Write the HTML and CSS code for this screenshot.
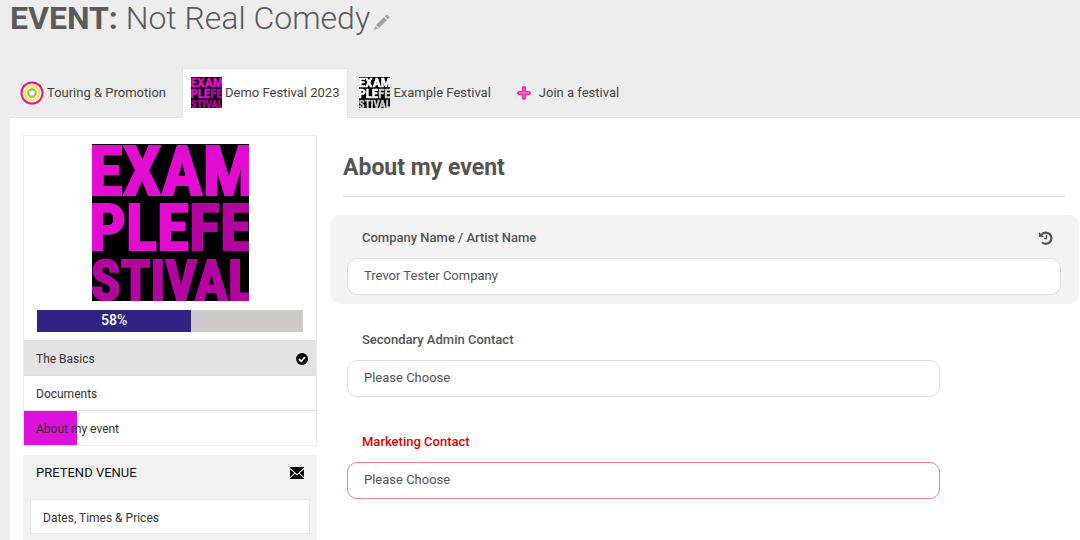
FILE: index.html
```
<!DOCTYPE html>
<html lang="en">
  <head>
    <meta charset="UTF-8" />
    <title>Not Real Comedy - About my event</title>
    <meta name="viewport" content="width=device-width, initial-scale=1.0" />
    <link rel="stylesheet" href="styles.css">
  </head>
  <body>
    <!-- Festival poster, shared by the tabs and the sidebar -->
    <svg class="sprite" aria-hidden="true">
      <symbol id="poster" viewBox="0 0 157 157">
        <rect class="poster-bg" width="157" height="157" />
        <g class="poster-text">
          <text class="row-1" x="-3" y="51">EXAM</text>
          <text class="row-2" x="-3" y="106">PLE<tspan class="dim">FE</tspan></text>
          <text class="row-3 dim" x="-1" y="156">STIVAL</text>
        </g>
      </symbol>
    </svg>

    <header class="page-header">
      <h1><strong>EVENT:</strong> Not Real Comedy</h1>
      <button class="icon-btn" type="button" aria-label="Edit event name">
        <svg width="16" height="16" viewBox="0 0 16 16" fill="#a3a3a3">
          <path d="M0 16l1.200-4.200 3 3zM2 11l7.800-7.800 3 3L5 14zM10.800 2.200l1.300-1.300q.8-.8 1.600 0l1.400 1.400q.8.800 0 1.600l-1.300 1.300z" />
        </svg>
      </button>
    </header>

    <nav class="tabs">
      <a class="tab" href="#">
        <svg class="rings" width="24" height="24" viewBox="0 0 24 24" fill="none" stroke-width="2">
          <circle cx="12" cy="12" r="10.500" fill="#fff" stroke="#ec1283" />
          <circle cx="12" cy="12" r="7.300" stroke="#ffee1c" />
          <circle cx="12" cy="12" r="3.800" stroke="#8cc63f" />
        </svg>
        Touring &amp; Promotion
      </a>
      <a class="tab active" href="#">
        <svg class="thumb" viewBox="0 0 157 157"><use href="#poster" /></svg>
        Demo Festival 2023
      </a>
      <a class="tab" href="#">
        <svg class="thumb mono" viewBox="0 0 157 157"><use href="#poster" /></svg>
        Example Festival
      </a>
      <a class="tab join" href="#">
        <svg width="14" height="14" viewBox="0 0 14 14">
          <path d="M7 2v10M2 7h10" stroke="#ff1aa6" stroke-width="4" stroke-linecap="round" />
          <path d="M7 2v10M2 7h10" stroke="#fba6d8" stroke-width="1" />
        </svg>
        Join a festival
      </a>
    </nav>

    <div class="panel">
      <aside class="sidebar">
        <div class="progress-card">
          <svg class="poster" viewBox="0 0 157 157" role="img" aria-label="Example Festival"><use href="#poster" /></svg>
          <div class="progress">
            <div class="progress-bar" style="width: 58%">58%</div>
          </div>
          <a class="step done" href="#">
            The Basics
            <svg width="12" height="12" viewBox="0 0 12 12">
              <circle cx="6" cy="6" r="6" />
              <path d="M3 6l2.300 2.300L9 4.200" fill="none" stroke="#fff" stroke-width="1.800" />
            </svg>
          </a>
          <a class="step" href="#">Documents</a>
          <a class="step current" href="#">About my event</a>
        </div>

        <div class="venue">
          <div class="venue-head">
            <h3>PRETEND VENUE</h3>
            <svg width="14" height="12" viewBox="0 0 14 12">
              <path d="M0 0h14v.8L7 7 0 .8zM0 2.200L4.200 6 0 10.200zM14 2.200L9.800 6l4.200 4.200zM0 12v-.6L5 6.800l2 1.700 2-1.700 5 4.600v.6z" />
            </svg>
          </div>
          <a class="step" href="#">Dates, Times &amp; Prices</a>
        </div>
      </aside>

      <main class="content">
        <h2>About my event</h2>
        <form>
          <div class="field highlighted">
            <div class="field-head">
              <label for="company">Company Name / Artist Name</label>
              <button class="icon-btn" type="button" aria-label="History">
                <svg width="14" height="14" viewBox="0 0 14 14" fill="none" stroke="#555">
                  <path d="M2.500 3.600A5.600 5.600 0 1 1 3 11.300" stroke-width="2.200" />
                  <path d="M0 1v5h5z" fill="#555" stroke="none" />
                  <path d="M7.500 4v3.500H5" stroke-width="1.300" />
                </svg>
              </button>
            </div>
            <input id="company" type="text" value="Trevor Tester Company" />
          </div>
          <div class="field">
            <div class="field-head">
              <label for="admin-contact">Secondary Admin Contact</label>
            </div>
            <select id="admin-contact">
              <option>Please Choose</option>
            </select>
          </div>
          <div class="field error">
            <div class="field-head">
              <label for="marketing-contact">Marketing Contact</label>
            </div>
            <select id="marketing-contact">
              <option>Please Choose</option>
            </select>
          </div>
        </form>
      </main>
    </div>
  </body>
</html>
```
FILE: styles.css
```
* {
  box-sizing: border-box;
}

body {
  margin: 0;
  padding-left: 10px;
  background: #ededed;
  color: #444;
  font-family: Roboto, "Liberation Sans", sans-serif;
  font-size: 13px;
  line-height: 20px;
}

a {
  color: inherit;
  text-decoration: none;
}

.sprite {
  display: none;
}

.page-header {
  display: flex;
  align-items: center;
  gap: 4px;
  height: 36px;
  margin-bottom: 32px;
}

h1 {
  margin: 0;
  color: #5a5a5a;
  font-size: 32px;
  font-weight: 300;
  line-height: 36px;
}

h1 strong {
  font-weight: 700;
}

.icon-btn {
  display: flex;
  padding: 0;
  border: 0;
  background: none;
  cursor: pointer;
}

.page-header .icon-btn {
  padding-top: 8px;
}

/* Tabs */
.tabs {
  display: flex;
  height: 50px;
  border-bottom: 1px solid #e4e4e4;
}

.tab {
  display: flex;
  align-items: center;
  gap: 3px;
  height: 50px;
  padding: 0 8px 2px;
  border: 1px solid transparent;
  border-bottom: 0;
}

.tab.active {
  border-color: #e4e4e4;
  background: #fff;
}

.tab:first-child {
  padding-right: 15px;
  padding-left: 9px;
}

.tab:nth-child(3) {
  padding-left: 10px;
}

.tab.join {
  gap: 8px;
  margin-left: 8px;
}

.thumb {
  width: 31px;
  height: 31px;
}

/* Poster */
.poster-bg {
  fill: #000;
}

.poster-text {
  fill: #e20dd0;
  stroke: #e20dd0;
  stroke-width: 2;
  font-family: "Roboto Condensed", "Liberation Sans Narrow", Roboto, sans-serif;
  font-weight: 700;
}

.poster-text .dim {
  fill: #b4049f;
  stroke: #b4049f;
}

.row-1 {
  font-size: 69px;
}

.row-2 {
  font-size: 65px;
}

.row-3 {
  font-size: 55px;
}

.mono {
  filter: grayscale(1) brightness(4);
}

/* Layout */
.panel {
  display: flex;
  gap: 13px;
  min-height: calc(100vh - 118px);
  padding: 17px 1px 0 13px;
  background: #fff;
}

.sidebar {
  flex: 0 0 294px;
  color: #333;
  font-size: 12px;
}

.progress-card {
  border: 1px solid #ececec;
}

.poster {
  display: block;
  width: 157px;
  height: 157px;
  margin: 8px auto 9px;
}

.progress {
  height: 22px;
  margin: 0 13px 8px;
  background: #cfcaca;
}

.progress-bar {
  height: 100%;
  background: #2e2483;
  color: #fff;
  font-size: 14px;
  font-weight: 500;
  line-height: 20px;
  text-align: center;
}

.step {
  display: flex;
  align-items: center;
  justify-content: space-between;
  height: 35px;
  padding: 2px 8px 0 12px;
  border-top: 1px solid #e0e0e0;
}

.step.done {
  background: #e3e3e3;
}

.step.current {
  background: linear-gradient(to right, #dc12dc 18%, #fff 18%);
}

.venue {
  margin-top: 9px;
  padding: 0 7px 6px;
  background: #f1f1f1;
}

.venue-head {
  display: flex;
  align-items: center;
  justify-content: space-between;
  padding: 8px 6px 16px;
}

h3 {
  margin: 0;
  color: #111;
  font-size: 13px;
  font-weight: 400;
  line-height: 20px;
}

.venue .step {
  border: 1px solid #e6e6e6;
  background: #fff;
}

/* Form */
.content {
  flex: 1;
}

h2 {
  margin: 0 14px 18px 13px;
  padding: 17px 0 12px;
  border-bottom: 1px solid #ddd;
  color: #555;
  font-size: 23px;
  font-weight: 700;
  line-height: 32px;
}

.field {
  margin-bottom: 13px;
  padding: 13px 18px 9px 17px;
  border-radius: 10px;
}

.field.highlighted {
  background: #f4f4f4;
}

.field.error {
  margin-bottom: 0;
}

.field-head {
  display: flex;
  align-items: center;
  justify-content: space-between;
  padding: 0 8px 10px 15px;
}

label {
  color: #555;
  font-weight: 500;
}

input,
select {
  display: block;
  width: 100%;
  height: 37px;
  padding: 0 16px 2px;
  border: 1px solid #ddd;
  border-radius: 10px;
  background: #fff;
  color: #555;
  font: inherit;
  appearance: none;
}

select {
  width: 83%;
}

.error label {
  color: #e30000;
}

.error select {
  border-color: #f97c96;
}
```
